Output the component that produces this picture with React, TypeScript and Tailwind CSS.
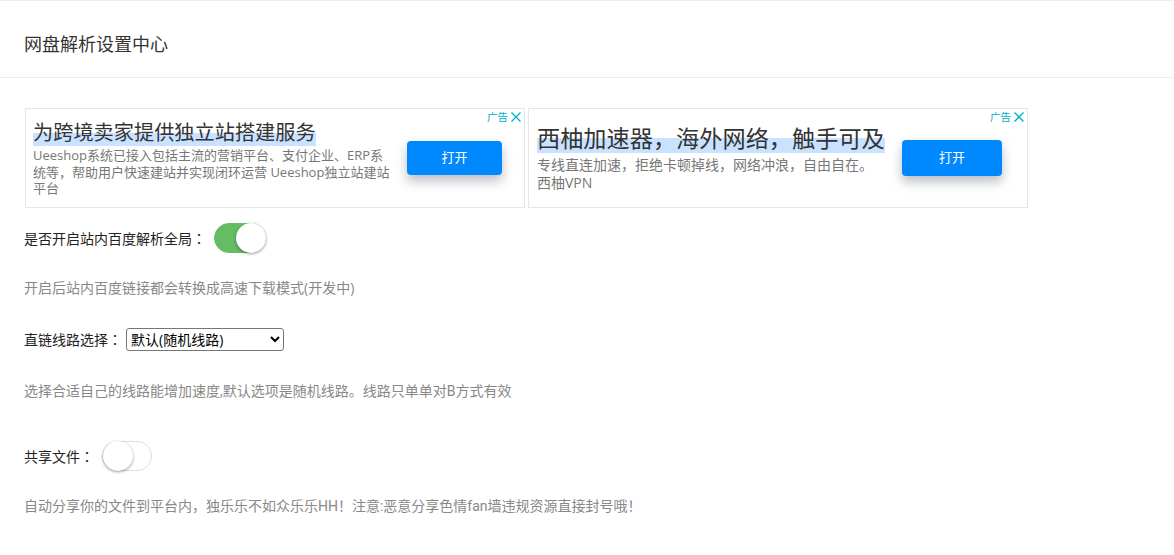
export default function App() {
  const font = "font-['Open_Sans','Noto_Sans_CJK_SC',sans-serif]";
  const colon = <span className="font-['Noto_Sans_CJK_TC',sans-serif]">：</span>;
  return (
    <div className={`${font} min-h-[555px] bg-white border-t border-[#eeeeee] overflow-hidden`}>
      <div className="h-[77px] border-b border-[#eeeeee] pl-[24px] flex items-center pt-[10px]">
        <h1 className="text-[18px] leading-[24px] text-[#333333]">网盘解析设置中心</h1>
      </div>
      <div className="pl-[25px] pt-[30px]">
        <div className="flex gap-[3px]">
          <div className="relative w-[500px] h-[100px] border border-[#e6e6e6] flex pl-[7px]">
            <div className="w-[361px] pt-[10px]">
              <div className="text-[20.2px] leading-[26px] pb-[1px] text-[#333333] w-fit whitespace-nowrap bg-[linear-gradient(transparent_52%,#c9e2ff_52%)]">为跨境卖家提供独立站搭建服务</div>
              <div className="text-[13px] leading-[16.5px] text-[#777777] mt-[1px]">Ueeshop系统已接入包括主流的营销平台、支付企业、ERP系统等，帮助用户快速建站并实现闭环运营 Ueeshop独立站建站平台</div>
            </div>
            <div className="ml-[13px] mt-[32px] w-[95px] h-[34px] rounded-[4px] bg-[#0088ff] text-white text-[13px] flex items-center justify-center shadow-[0_6px_12px_rgba(60,70,90,0.35)]">打开</div>
            <div className="absolute top-[1px] right-[2px] flex items-center gap-[2px] text-[#00aecd]">
              <span className="text-[10.5px] leading-[14px]">广告</span>
              <svg width="12" height="12" viewBox="0 0 12 12" fill="none" stroke="#00aecd" strokeWidth="1.3"><path d="M1.5 1.5 L10.5 10.5 M10.5 1.5 L1.5 10.5" /></svg>
            </div>
          </div>
          <div className="relative w-[500px] h-[100px] border border-[#e6e6e6] flex pl-[8px]">
            <div className="w-[350px] pt-[15px]">
              <div className="text-[23.2px] leading-[29px] text-[#333333] w-fit whitespace-nowrap bg-[linear-gradient(transparent_48%,#c9e2ff_48%)]">西柚加速器，海外网络，触手可及</div>
              <div className="text-[14px] leading-[17.5px] text-[#777777] mt-[3px] w-[340px]">专线直连加速，拒绝卡顿掉线，网络冲浪，自由自在。西柚VPN</div>
            </div>
            <div className="ml-[15px] mt-[31px] w-[100px] h-[36px] rounded-[4px] bg-[#0088ff] text-white text-[13px] flex items-center justify-center shadow-[0_6px_12px_rgba(60,70,90,0.35)]">打开</div>
            <div className="absolute top-[1px] right-[2px] flex items-center gap-[2px] text-[#00aecd]">
              <span className="text-[10.5px] leading-[14px]">广告</span>
              <svg width="12" height="12" viewBox="0 0 12 12" fill="none" stroke="#00aecd" strokeWidth="1.3"><path d="M1.5 1.5 L10.5 10.5 M10.5 1.5 L1.5 10.5" /></svg>
            </div>
          </div>
        </div>

        <div className="mt-[15px] flex items-center h-[30px]">
          <span className="text-[14px] -ml-[1px] text-[#222222] w-[190px] whitespace-nowrap">是否开启站内百度解析全局{colon}</span>
          <div className="relative w-[52px] h-[30px] rounded-full bg-[#64bd63] border border-[#64bd63]">
            <div className="absolute right-[-1px] top-[-1px] w-[30px] h-[30px] rounded-full bg-white shadow-[0_1px_3px_rgba(0,0,0,0.4)]" />
          </div>
        </div>
        <p className="mt-[25px] -ml-[1px] text-[14px] leading-[20px] text-[#888888]">开启后站内百度链接都会转换成高速下载模式(开发中)</p>

        <div className="mt-[30px] flex items-center h-[23px]">
          <span className="text-[14px] -ml-[1px] text-[#222222] w-[102px] whitespace-nowrap">直链线路选择{colon}</span>
          <select defaultValue="a" className="w-[158px] h-[23px] border border-[#767676] rounded-[3px] bg-white text-[14px] text-black appearance-auto">
            <option value="a">默认(随机线路)</option>
          </select>
        </div>
        <p className="mt-[30px] -ml-[1px] text-[14px] leading-[20px] text-[#888888] font-['Roboto','Noto_Sans_CJK_SC',sans-serif]">选择合适自己的线路能增加速度,默认选项是随机线路。线路只单单对B方式有效</p>

        <div className="mt-[40px] flex items-center h-[30px]">
          <span className="text-[14px] -ml-[1px] text-[#222222] w-[78px] whitespace-nowrap">共享文件{colon}</span>
          <div className="relative w-[50px] h-[30px] rounded-full bg-white border border-[#dfdfdf]">
            <div className="absolute left-0 top-[-1px] w-[30px] h-[30px] rounded-full bg-white shadow-[0_1px_3px_rgba(0,0,0,0.4)]" />
          </div>
        </div>
        <p className="mt-[25px] -ml-[1px] text-[14px] leading-[20px] text-[#888888] font-['Roboto','Noto_Sans_CJK_SC',sans-serif]">自动分享你的文件到平台内，独乐乐不如众乐乐HH！注意:恶意分享色情fan墙违规资源直接封号哦！</p>
      </div>
    </div>
  );
}
